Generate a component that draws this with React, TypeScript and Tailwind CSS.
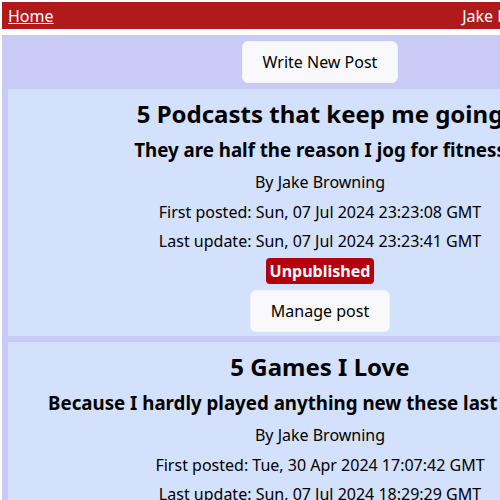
import React from "react";

const posts = [
  {
    id: 1,
    title: "5 Podcasts that keep me going",
    subtitle: "They are half the reason I jog for fitness",
    author: "Jake Browning",
    first: "Sun, 07 Jul 2024 23:23:08 GMT",
    last: "Sun, 07 Jul 2024 23:23:41 GMT",
    published: false,
  },
  {
    id: 2,
    title: "5 Games I Love",
    subtitle: "Because I hardly played anything new these last few years",
    author: "Jake Browning",
    first: "Tue, 30 Apr 2024 17:07:42 GMT",
    last: "Sun, 07 Jul 2024 18:29:29 GMT",
    published: false,
  },
];

export default function App() {
  return (
    <div
      className="w-[640px] p-[2px] bg-white text-black"
      style={{ fontFamily: '"Noto Sans", sans-serif' }}
    >
      {/* Header */}
      <nav className="flex justify-between items-center h-[27px] px-[6px] bg-[#b01a1a] text-white text-base">
        <a href="#" className="underline">Home</a>
        <div className="flex gap-[5px]">
          <span>Jake Browning</span>
          <a href="#" className="underline">Log out</a>
        </div>
      </nav>

      <main className="mt-[6px] bg-[#c9cbf6] p-[6px] flex flex-col gap-[6px]">
        <div className="flex justify-center">
          <button className="px-5 py-2 rounded-md bg-[#f9f9fb] border border-[#f3f3f6] leading-6">
            Write New Post
          </button>
        </div>

        {posts.map((post) => (
          <div
            key={post.id}
            className="bg-[#d4e1fc] pt-[9px] pb-[4px] flex flex-col items-center text-center"
          >
            <h2 className="text-2xl font-bold leading-8">{post.title}</h2>
            <h3 className="mt-[6px] text-[18.72px] font-bold leading-7 whitespace-nowrap">{post.subtitle}</h3>
            <p className="mt-[6px] leading-6">By {post.author}</p>
            <p className="mt-[6px] leading-6">First posted: {post.first}</p>
            <p className="mt-[5px] leading-6">Last update: {post.last}</p>
            {!post.published && (
              <span className="mt-[5px] bg-[#b3000b] text-white font-bold px-1 py-px rounded-[4px] leading-6">
                Unpublished
              </span>
            )}
            <button className="mt-[6px] px-5 py-2 rounded-md bg-[#f9f9fb] border border-[#f3f3f6] leading-6">
              Manage post
            </button>
          </div>
        ))}
      </main>
    </div>
  );
}
